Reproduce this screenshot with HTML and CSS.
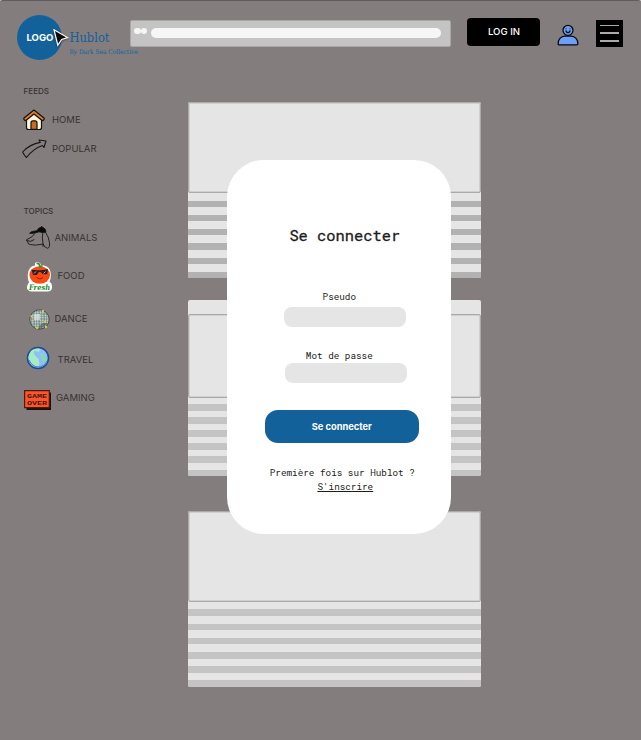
FILE: index.html
```html
<!DOCTYPE html>
<html lang="fr">
<head>
<meta charset="utf-8">
<title>Hublot</title>
<link rel="stylesheet" href="styles.css">
</head>
<body>
<div class="app">
  <header class="header">
    <div class="logo">LOGO
      <svg class="cursor" width="17" height="20" viewBox="0 0 17 20"><path d="M1 .7 14.500 8.500 8.700 10.500 4.800 16.200Z" fill="#0b0b0b" stroke="#fff" stroke-width="1.200"/></svg>
    </div>
    <div class="brand"><div class="name">Hublot</div><div class="tagline">By Dark Sea Collective</div></div>
    <div class="browser"><i class="dot"></i><i class="dot"></i><div class="address"></div></div>
    <button class="login">LOG IN</button>
    <svg class="user" width="22" height="22" viewBox="0 0 22 22" fill="#6b9ff8" stroke="#08090c" stroke-width="1.300"><path d="M1.200 20.200C.8 15 4 12.400 8 12.200h6c4 .2 7.200 3 6.800 8-.1.600-.4.600-1 .6H2c-.5 0-.8 0-.8-.6Z"/><circle cx="11" cy="6.300" r="5"/><path d="M9 6.500c.2 2.700 3.800 2.700 4 0M9 4.600v.6M13 4.600v.6" fill="none"/></svg>
    <div class="menu"><span></span><span></span><span></span></div>
  </header>
  <div class="body">
    <nav class="sidebar">
      <h2>FEEDS</h2>
      <a class="item home"><svg width="22" height="22" viewBox="0 0 22 22" stroke="#111" stroke-width="1.200" stroke-linejoin="round"><path d="M3.500 9v9.500q0 2 2 2h11q2 0 2-2V9L11 3Z" fill="#fff4dc"/><path d="M8 20.300v-6.500q0-2 2-2h2q2 0 2 2v6.500Z" fill="#c96c1c"/><path d="M11 1 1 9q-.6 1 .4 2 1 1 2.100 0L11 5l7.500 6q1.100 1 2.100 0 1-1 .4-2Z" fill="#de7a22"/></svg>HOME</a>
      <a class="item popular"><svg width="26" height="20" viewBox="0 0 26 20" fill="none" stroke="#171717" stroke-width="1.100" stroke-linejoin="round"><path d="M.6 13Q8 5 18.300 3.400L17 1 24 2 22 8.500 20.500 6.500Q12 9 4.500 18.500Q2 16 .6 13Z"/></svg>POPULAR</a>
      <h2 class="topics">TOPICS</h2>
      <a class="item animals"><svg width="26" height="24" viewBox="0 0 26 24" fill="none" stroke="#171717" stroke-width=".9" stroke-linecap="round" stroke-linejoin="round"><path d="M8.500 8Q7 11 2 13q-2 .5-1.500 1.700l1.500 1.500Q1.500 18.300 4.500 18.600l5 .5 7.500-1M1 14.700q4 2 7-1M16.800 6.500Q15.800 12 17 17.500q1 4 4.500 4.800 2.500-.5 2-5.500-.6-6-3.700-10M17 18.500v2"/><path d="M4 7.200Q4 5.600 8 5.200l3-.5Q12 1.700 15 1.300L15.700.3l.8 1Q20 2.500 20 6.200 16 7 13 5.800 8 7.900 4 7.200Z" fill="#090909"/></svg>ANIMALS</a>
      <a class="item food"><svg width="28" height="32" viewBox="0 0 28 32"><path d="M9 2q3-2.500 5.500.7l.5 1.500q7 0 9 5 2 6-.5 11.500 3 1.500 2.500 6-.5 4-4.700 3.700H5Q.8 30 1 26q.2-3 2-4.500Q0 12 4 7q2-2.500 5-2.500Z" fill="#fff"/><ellipse cx="13.700" cy="14" rx="10.300" ry="8.800" fill="#fc4811"/><path d="M10.500 2.500q4-.5 3 4M13.500 6.500q1-2 3-1" fill="none" stroke="#29952b" stroke-width="1.700"/><path d="M5 8.800 12 9.300h2.500L22 8.300l-.7 5h-4.500L14.500 11h-1.700l-1.900 3H7L5.900 10Z" fill="#302026"/><path d="m8 12.500 2-2m7.500 2 2-2" stroke="#e6a0a0" stroke-width="1"/><path d="M10.500 16.500q3.500 3 6.500 0" fill="none" stroke="#8d2210" stroke-width="1"/><text class="fresh" x="3" y="28.500" textLength="21" lengthAdjust="spacingAndGlyphs">Fresh</text></svg>FOOD</a>
      <a class="item dance"><svg width="21" height="21" viewBox="0 0 21 21"><defs><pattern id="tiles" width="2.500" height="2.500" patternUnits="userSpaceOnUse"><path d="M0 0h2.500v2.500H0Z" fill="#26302f"/><path d="M.3.300h2v2h-2Z" fill="#d2e8e0"/></pattern></defs><circle cx="10.500" cy="10.500" r="9.700" fill="url(#tiles)" stroke="#34403d" stroke-width=".8"/><path d="M5 5h6v6H5Z" fill="#fff" opacity=".5"/><path d="M14 14h5l-4 4-5 2v-3Z" fill="#25383a" opacity=".45"/><path d="M1.500 6h2v2h-2ZM13 1h2v2h-2ZM15 12h2v2h-2ZM7 18h2v2H7ZM16 17h2v2h-2Z" fill="#d5ca3c"/></svg>DANCE</a>
      <a class="item travel"><svg width="24" height="24" viewBox="0 0 24 24"><circle cx="12" cy="12" r="10.500" fill="#91bdfa" stroke="#174d91" stroke-width="1.500"/><path d="M2.500 11Q4 4 8 3l2 2.500 3 .2L14.500 3q-3-1-6 0 0 4-1 4l2 3 3 3 1 5-1.500 3Q5 20 3 14Z" fill="#a6ecc2"/><path d="m14.500 7 4 1.500L21 13l-.5 4-2 2-1.500-4.500-2.500-3Z" fill="#82d9bf"/><path d="M3 14q3 6.500 9 7 6 0 9-6" fill="none" stroke="#467ccc" stroke-width="1"/></svg>TRAVEL</a>
      <a class="item gaming"><svg width="27" height="20" viewBox="0 0 27 20"><path d="M2.500 2.500H27V20H2.500Z" fill="#17100f"/><path d="M.6.600h24.700v17H.6Z" fill="#ff5428" stroke="#4c1a12" stroke-width="1.200"/><text class="over" x="3" y="7.800" textLength="20" lengthAdjust="spacingAndGlyphs">GAME</text><text class="over" x="3" y="15.400" textLength="20" lengthAdjust="spacingAndGlyphs">OVER</text></svg>GAMING</a>
    </nav>
    <main class="feed">
      <article class="post first"><div class="picture"></div><div class="lines"></div></article>
      <article class="post second"><div class="picture"></div><div class="lines"></div></article>
      <article class="post third"><div class="picture"></div><div class="lines"></div></article>
    </main>
  </div>
  <section class="modal">
    <h1>Se connecter</h1>
    <label class="pseudo">Pseudo</label>
    <div class="field"></div>
    <label class="password">Mot de passe</label>
    <div class="field shifted"></div>
    <button class="submit">Se connecter</button>
    <p>Première fois sur Hublot ?</p>
    <a class="signup">S'inscrire</a>
  </section>
</div>
</body>
</html>
```
FILE: styles.css
```css
* { box-sizing: border-box; }
body { margin: 0; background: #c4c1c1; font-family: Inter, sans-serif; }
.app { position: relative; width: 641px; height: 740px; overflow: hidden; background: #847d7d; border-top: 1px solid #625c5c; border-radius: 3px 3px 0 0; }
.header { display: flex; align-items: flex-start; height: 75px; padding: 14px 18px 0 17.400px; }
.logo { position: relative; display: flex; align-items: center; justify-content: center; width: 45px; height: 45px; border-radius: 50%; background: #12619a; color: #fff; font-size: 9.500px; font-weight: 700; }
.cursor { position: absolute; left: 36px; top: 14px; filter: drop-shadow(0 1px 1px #0006); }
.brand { position: relative; z-index: 1; width: 68px; margin: 14px 0 0 7px; color: #12619a; font-family: "DejaVu Serif Condensed", "DejaVu Serif", serif; font-stretch: condensed; white-space: nowrap; }
.name { font-size: 12.800px; line-height: 17px; }
.tagline { font-size: 6.500px; line-height: 12px; letter-spacing: .02px; }
.browser { display: flex; align-items: center; width: 321px; height: 27px; margin: 4.500px 0 0 -7.400px; padding: 0 9px 1px 3px; background: #c4c4c4; border: 1px solid #aaa6a6; border-radius: 2px; }
.dot { width: 6.500px; height: 6.500px; margin: -3px .3px 0 0; border-radius: 50%; background: #f6f6f6; }
.address { flex: 1; height: 10px; margin-left: 3.500px; border-radius: 5px; background: #f6f6f6; }
.login { width: 73px; height: 28px; margin: 2.500px 0 0 16px; border: 0; border-radius: 4px; background: #000; color: #fff; font: 500 9.600px Inter, sans-serif; padding: 0 0 1px 1px; }
.user { margin: 8.500px 0 0 16.500px; }
.menu { display: flex; flex-direction: column; justify-content: space-between; width: 27px; height: 27px; margin: 4.500px 0 0 17px; padding: 5px 4px; background: #000; }
.menu span { height: 1.500px; background: #aaa; }
.body { display: flex; }
.sidebar { width: 188px; padding: 10px 0 0 23.500px; color: #353333; }
.sidebar h2 { margin: 0; font-size: 8.100px; font-weight: 500; line-height: 10px; }
.sidebar .topics { margin-top: 45.500px; }
.item { display: flex; align-items: center; font-size: 9.500px; line-height: 12px; }
.item svg { flex: none; }
.home { height: 24px; margin: 12px 0 0 -.5px; gap: 7px; }
.popular { height: 24px; margin: 4.500px 0 0 -1.500px; gap: 4px; }
.animals { height: 24px; margin: 10px 0 0 2px; gap: 3px; }
.food { height: 32px; margin: 10px 0 0 2px; gap: 4px; }
.food svg { margin-top: 2px; }
.dance { height: 22px; margin: 16px 0 0 5px; gap: 5px; }
.travel { height: 24px; margin: 17.500px 0 0 2.500px; gap: 7.500px; }
.travel svg { margin-top: -4px; }
.gaming { height: 20px; margin: 16.500px 0 0 .5px; gap: 5px; }
.gaming svg { margin-top: 4px; }
.fresh { fill: #238c29; font: italic bold 7.500px "DejaVu Serif", serif; }
.over { fill: #46180f; font: bold 6px/6px "Liberation Mono", monospace; }
.feed { width: 293px; padding-top: 26px; }
.post { display: flex; flex-direction: column; background: #e5e5e5; border-radius: 2px; overflow: hidden; }
.picture { flex: none; border: 1px solid #aaa; border-radius: 2px; box-shadow: inset 0 0 0 .5px #bbb; }
.lines { flex: 1; background: repeating-linear-gradient(to top, #b2b2b2 0 6.200px, #e5e5e5 6.200px 14.200px); }
.first { height: 176px; }
.first .picture, .third .picture { height: 91px; }
.second { height: 176px; margin-top: 22px; padding-top: 13.500px; }
.second .picture { height: 84px; }
.second .lines { background: repeating-linear-gradient(to top, #c4c4c4 0 6.500px, #e5e5e5 6.500px 13.100px); }
.third { height: 176px; margin-top: 35px; }
.third .lines { background: repeating-linear-gradient(to top, #c4c4c4 0 6.700px, #e5e5e5 6.700px 14.200px); }
.modal { position: absolute; left: 227.300px; top: 159.400px; width: 224px; height: 374px; display: flex; flex-direction: column; align-items: center; border-radius: 37px; background: #fff; color: #1c1c1c; font: 9.300px/14px "Roboto Mono", "DejaVu Sans Mono", monospace; }
.modal h1 { margin: 63.500px 0 0 11px; font-size: 15.400px; line-height: 22px; font-weight: 400; -webkit-text-stroke: .3px #1c1c1c; }
.pseudo { margin-top: 44px; }
.field { width: 122px; height: 20px; margin: 3.500px 0 0 12px; border-radius: 8px; background: #e5e5e5; }
.password { margin-top: 21.500px; }
.field.shifted { margin: .5px 0 0 13px; }
.submit { width: 154px; height: 33px; margin: 27px 0 0 5px; padding: 0; border: 0; border-radius: 13px; background: #12619a; color: #fff; font: 700 9.300px Inter, sans-serif; }
.modal p { margin: 22.500px 0 0 6px; white-space: nowrap; }
.signup { margin: .5px 0 0 12px; text-decoration: underline; }
```
